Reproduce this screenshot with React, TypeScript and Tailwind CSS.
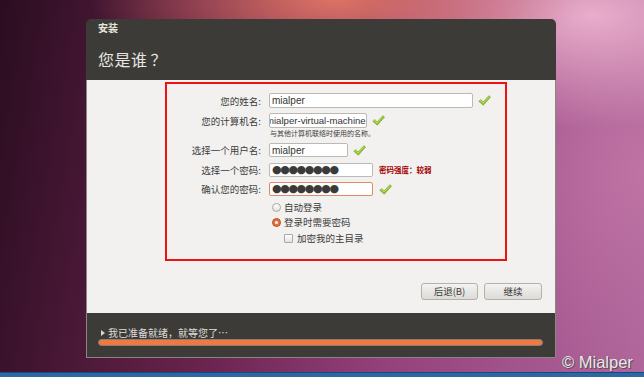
import React, { useEffect, useRef } from "react";

const cjk = "font-['Noto_Sans_CJK_SC','Liberation_Sans',sans-serif]";
const latin = "font-['Liberation_Sans','Noto_Sans_CJK_SC',sans-serif]";

function Check() {
  return (
    <svg width="13" height="11" viewBox="0 0 13 11" className="shrink-0">
      <path
        d="M0.8 6.3 L3 4.6 L5 7.1 L10.9 0.7 L12.5 2.1 L5.3 10.2 Z"
        fill="#93c42e"
        stroke="#6e9c1c"
        strokeWidth="0.6"
        strokeLinejoin="round"
      />
      <path d="M2 6.1 L3 5.4 L5 8 L10.9 1.6" fill="none" stroke="#c8e67a" strokeWidth="0.7" />
    </svg>
  );
}

function Label({ text }: { text: string }) {
  return (
    <div className={`w-[94px] text-right text-[9.5px] leading-[14px] text-[#3c3c3c] ${cjk}`}>{text}</div>
  );
}

function Dots() {
  return (
    <span className="font-['DejaVu_Sans',sans-serif] text-[11px] leading-[12px] tracking-[-1.4px] text-[#3a3a3a]">
      ●●●●●●●●
    </span>
  );
}

function Radio({ on, text }: { on?: boolean; text: string }) {
  return (
    <div className="flex items-center h-[14px] pl-[3px] gap-[3px]">
      {on ? (
        <span className="w-[9px] h-[9px] rounded-full bg-[#e8703d] border border-[#b8512a] flex items-center justify-center">
          <span className="w-[3px] h-[3px] rounded-full bg-white" />
        </span>
      ) : (
        <span className="w-[9px] h-[9px] rounded-full border border-[#aaa6a0] bg-gradient-to-b from-white to-[#e4e2de]" />
      )}
      <span className={`text-[9.5px] leading-[14px] text-[#3c3c3c] ${cjk}`}>{text}</span>
    </div>
  );
}

export default function App() {
  const hostRef = useRef<HTMLInputElement>(null);
  useEffect(() => {
    // the field is scrolled to its end, as GTK shows it
    if (hostRef.current) hostRef.current.scrollLeft = hostRef.current.scrollWidth;
  }, []);

  return (
    <div className="relative w-[644px] h-[377px] overflow-hidden flex flex-col bg-[radial-gradient(ellipse_38%_22%_at_52%_0%,rgba(226,118,100,0.95),transparent),radial-gradient(ellipse_35%_30%_at_92%_4%,rgba(236,178,206,0.95),transparent),radial-gradient(ellipse_30%_60%_at_100%_45%,rgba(196,120,168,0.8),transparent),linear-gradient(100deg,#2a0d20_0%,#421531_14%,#6a244f_38%,#92407a_62%,#a2548c_82%,#ad649a_100%)]">
      <div className="flex-1 pt-[19px] pl-[86px]">
        {/* window */}
        <div className="w-[470px] flex flex-col">
          {/* header */}
          <div className="h-[61px] bg-[#3c3b37] rounded-t-[5px] pl-[12px] pt-[2px]">
            <div className={`text-[10px] leading-[12px] font-bold text-[#e6e4df] ${cjk} mt-[1px]`}>安装</div>
            <div className={`text-[16px] leading-[20px] tracking-[0.5px] text-[#e8e6e1] ${cjk} mt-[15px]`}>
              您是谁<span className="ml-[3px]">？</span>
            </div>
          </div>

          {/* body */}
          <div className="h-[233px] bg-[#f2f1ef] border-x border-[#8a8782] flex flex-col">
            <div className="ml-[78px] mt-[2px] w-[342px] h-[179px] border-2 border-[#ee1111] flex flex-col pt-[9px]">
              <div className="flex items-center h-[15px] gap-[8px]">
                <Label text="您的姓名:" />
                <div className={`w-[204px] h-[15px] bg-white border border-[#bcb8b2] rounded-[2px] flex items-center px-[2px] text-[10px] text-[#333] ${latin}`}>
                  mialper
                </div>
                <span className="ml-[-3px]"><Check /></span>
              </div>

              <div className="flex items-center h-[15px] gap-[8px] mt-[5px]">
                <Label text="您的计算机名:" />
                <input
                  ref={hostRef}
                  readOnly
                  value="mialper-virtual-machine"
                  className={`w-[98px] h-[15px] bg-white border border-[#bcb8b2] rounded-[2px] px-0 text-[9.6px] text-[#333] outline-none ${latin}`}
                />
                <span className="ml-[-3px]"><Check /></span>
              </div>

              <div className={`h-[11px] pl-[103px] text-[7px] leading-[11px] text-[#3c3c3c] ${cjk}`}>与其他计算机联络时使用的名称。</div>

              <div className="flex items-center h-[14px] gap-[8px] mt-[4px]">
                <Label text="选择一个用户名:" />
                <div className={`w-[79px] h-[14px] bg-white border border-[#bcb8b2] rounded-[2px] flex items-center px-[2px] text-[10px] text-[#333] ${latin}`}>
                  mialper
                </div>
                <span className="ml-[-3px]"><Check /></span>
              </div>

              <div className="flex items-center h-[14px] gap-[8px] mt-[6px]">
                <Label text="选择一个密码:" />
                <div className="w-[104px] h-[14px] bg-white border border-[#bcb8b2] rounded-[2px] flex items-center px-[2px]">
                  <Dots />
                </div>
                <span className={`ml-[-2px] text-[7.5px] leading-[10px] font-bold text-[#a30000] ${cjk}`}>密码强度：较弱</span>
              </div>

              <div className="flex items-center h-[14px] gap-[8px] mt-[5px]">
                <Label text="确认您的密码:" />
                <div className="w-[104px] h-[14px] bg-white border border-[#df8a64] rounded-[2px] flex items-center px-[2px]">
                  <Dots />
                </div>
                <span className="ml-[-2px]"><Check /></span>
              </div>

              <div className="pl-[102px] mt-[4px] flex flex-col">
                <Radio text="自动登录" />
                <div className="mt-[1px]">
                  <Radio on text="登录时需要密码" />
                </div>
                <div className="mt-[2px] flex items-center h-[14px] pl-[15px] gap-[4px]">
                  <span className="w-[9px] h-[9px] rounded-[1px] border border-[#aaa6a0] bg-gradient-to-b from-white to-[#e4e2de]" />
                  <span className={`text-[9.5px] leading-[14px] text-[#3c3c3c] ${cjk}`}>加密我的主目录</span>
                </div>
              </div>
            </div>

            <div className="mt-auto mb-[13px] pr-[13px] flex justify-end gap-[6px]">
              <button className={`w-[57px] h-[17px] rounded-[3px] border border-[#b4b0aa] bg-gradient-to-b from-[#f4f3f1] to-[#dddbd7] text-[9.5px] leading-[15px] text-[#3c3c3c] ${cjk}`}>
                后退(B)
              </button>
              <button className={`w-[58px] h-[17px] rounded-[3px] border border-[#b4b0aa] bg-gradient-to-b from-[#f4f3f1] to-[#dddbd7] text-[9.5px] leading-[15px] text-[#3c3c3c] ${cjk}`}>
                继续
              </button>
            </div>
          </div>

          {/* footer */}
          <div className="h-[45px] bg-[#3c3b37] border-x border-b border-[#8a8782] pl-[11px] pr-[12px] pt-[14px]">
            <div className="flex items-center gap-[3px] pl-[3px]">
              <svg width="4" height="6" viewBox="0 0 4 6">
                <path d="M0 0 L4 3 L0 6 Z" fill="#d8d6d1" />
              </svg>
              <span className={`text-[10px] leading-[12px] text-[#dedcd7] ${cjk}`}>我已准备就绪，就等您了…</span>
            </div>
            <div className="h-[7px] rounded-full bg-[#f07843] border border-[#8e7c70]" />
          </div>
        </div>
      </div>

      {/* taskbar */}
      <div className="h-[5px] bg-[#2c69a4] border-t border-[#174a7c]" />

      <div
        className={`absolute left-[562px] top-[352px] text-[16.5px] leading-[20px] text-[#f1e4ee] ${latin} [text-shadow:1px_1px_0_#5a4a56,-1px_0_0_#7a6874]`}
      >
        © Mialper
      </div>
    </div>
  );
}
